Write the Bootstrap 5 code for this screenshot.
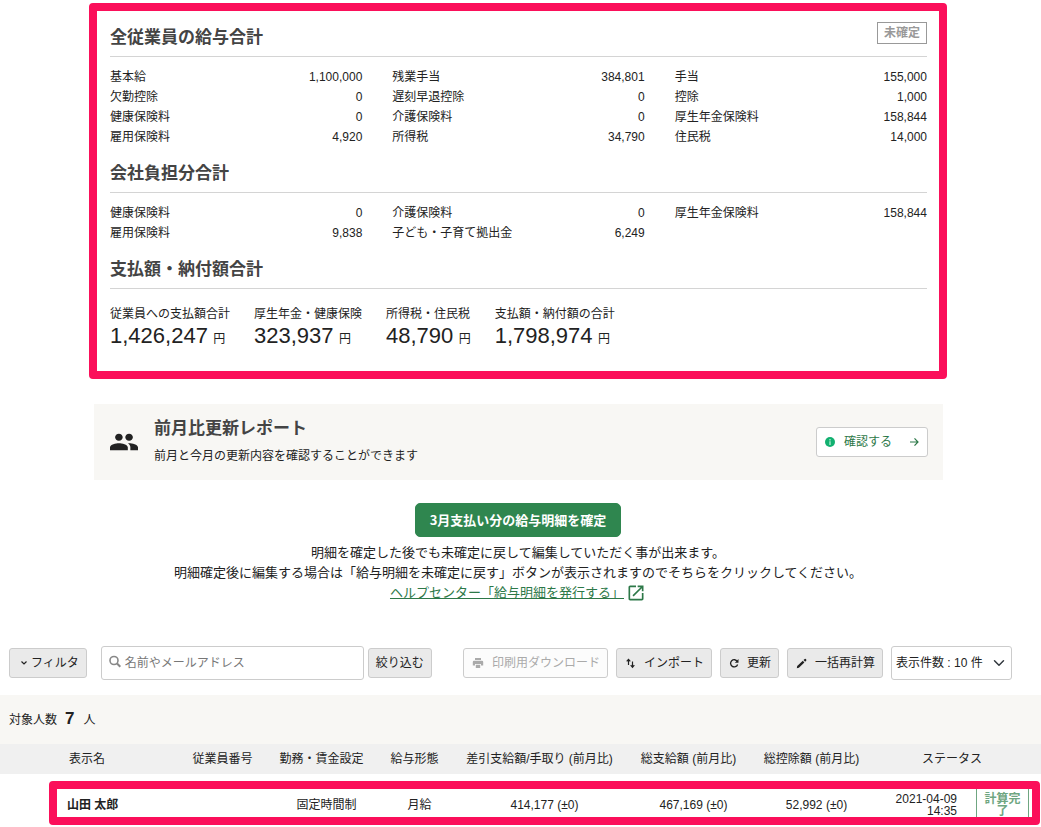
<!DOCTYPE html>
<html lang="ja">
<head>
<meta charset="utf-8">
<meta name="viewport" content="width=device-width, initial-scale=1">
<title>給与明細</title>
<link href="https://cdn.jsdelivr.net/npm/bootstrap@5.3.0/dist/css/bootstrap.min.css" rel="stylesheet">
<style>
  body { font-family: "Liberation Sans", "Noto Sans CJK JP", sans-serif; font-size: 12px; line-height: 20px; color: #222; background: #fff; }
  svg { fill: currentColor; flex: none; }
  .frame { border: 8px solid #fb0f5a; border-radius: 4px; }
  .page-col { max-width: 863px; padding: 3px 5px 0 0; }
  .summary { padding: 11px 12px 20px 13px; }
  .section-head { border-bottom: 1px solid #d4d4d4; padding-bottom: 6px; margin-bottom: 10px; }
  .section-title { font-size: 17px; line-height: 24px; font-weight: 700; color: #444; margin: 0; }
  .later { margin-top: 15px; }
  .first-title { padding-top: 4px; }
  .state { border: 1px solid #999; color: #999; font-weight: 700; padding: 0 6px; height: 22px; line-height: 20px; }
  .sums { --bs-gutter-x: 30px; }
  .sums dt, .totals dt { font-weight: 400; }
  .totals { gap: 24px; padding-top: 5px; }
  .totals dd { line-height: 24px; }
  .amount { font-size: 22px; line-height: 24px; margin-right: 2px; }
  .report { background: #f8f7f4; margin: 25px 4px 0 5px; padding: 13px 15px 14px 16px; }
  .report p { line-height: 20px; margin-top: 5px; }
  .btn { font-size: 12px; line-height: 20px; border-radius: 3px; padding: 4px 8px; color: #222; white-space: nowrap; }
  .btn-check-report { background: #fff; border-color: #ccc; color: #2d7848; }
  .btn-check-report span { margin: 0 17px 0 9px; }
  .btn-fix { background: #2f864f; border-color: #2f864f; color: #fff; font: 700 13px/20px "Noto Sans CJK JP", sans-serif; border-radius: 5px; padding: 6px 14px; margin-top: 23px; }
  .guide { font-size: 13px; }
  .guide p { margin: 6px 0 0; }
  .guide a { color: #2d7848; }
  .guide svg { margin-left: 2px; }
  .tools { padding: 0 29px 0 9px; margin-top: 43px; }
  .btn-tool, .btn-tool:disabled { background: #eaeaea; border-color: #ccc; height: 30px; }
  .btn-tool:disabled { background: #fcfcfc; border-color: #ccc; color: #aaa; opacity: 1; }
  .btn-narrow { padding: 4px 7px; }
  .tool-icon { gap: 8px; padding: 4px 7px 4px 8px; }
  .search { border: 1px solid #ccc; border-radius: 3px; height: 34px; max-width: 263px; padding: 0 7px; gap: 4px; margin-left: 14px; color: #888; }
  .search input { font-size: 12px; line-height: 20px; border: 0; padding: 0; min-width: 0; outline: 0; color: #222; }
  .search input::placeholder { color: #777; }
  .form-select { font-size: 12px; line-height: 20px; height: 34px; width: 121px; padding: 0 24px 0 4px; border-color: #ccc; border-radius: 3px; color: #222; background-position: right 6px center; background-size: 12px 12px; }
  .headcount { background: #f8f7f4; padding: 14px 9px; margin-top: 15px; }
  .headcount strong { font-size: 17px; margin: 0 9px 0 8px; }
  .staff { table-layout: fixed; min-width: 960px; margin: 0; color: #222; --bs-table-color: #222; }
  .staff th, .staff td { border: 0; padding: 5px 0; text-align: center; font-weight: 400; vertical-align: middle; white-space: nowrap; }
  .staff thead th { background: #f0f0f0; color: #222; }
  .staff thead th:last-child { padding-right: 10px; }
  .staff tbody td, .staff tbody th { height: 53px; padding: 8px 0 0 10px; }
  .staff tr > .name { text-align: left; padding-left: 20px; }
  .staff tbody tr > .name { font-weight: 700; padding-left: 18px; }
  .done { border: 1px solid #6fa681; color: #6fa681; font-weight: 700; width: 53px; line-height: 12px; padding: 7px 6px; white-space: normal; }
  .stamp { line-height: 12px; text-align: right; margin-right: 19px; }
  .row-mark { left: 49px; right: 1px; bottom: 2px; height: 44px; pointer-events: none; }
  .w-pick { width: 49px; } .w-num { width: 87px; } .w-rule { width: 111px; } .w-type { width: 75px; }
  .w-net { width: 175px; } .w-sum { width: 123px; } .w-state { width: 168px; }
</style>
</head>
<body>
<main>
  <div class="page-col mx-auto">
    <section class="frame summary">
      <div class="section-head d-flex justify-content-between align-items-start">
        <h2 class="section-title first-title">全従業員の給与合計</h2>
        <span class="state">未確定</span>
      </div>
      <div class="row sums">
        <dl class="col-4 mb-0">
          <div class="d-flex justify-content-between"><dt>基本給</dt><dd class="m-0">1,100,000</dd></div>
          <div class="d-flex justify-content-between"><dt>欠勤控除</dt><dd class="m-0">0</dd></div>
          <div class="d-flex justify-content-between"><dt>健康保険料</dt><dd class="m-0">0</dd></div>
          <div class="d-flex justify-content-between"><dt>雇用保険料</dt><dd class="m-0">4,920</dd></div>
        </dl>
        <dl class="col-4 mb-0">
          <div class="d-flex justify-content-between"><dt>残業手当</dt><dd class="m-0">384,801</dd></div>
          <div class="d-flex justify-content-between"><dt>遅刻早退控除</dt><dd class="m-0">0</dd></div>
          <div class="d-flex justify-content-between"><dt>介護保険料</dt><dd class="m-0">0</dd></div>
          <div class="d-flex justify-content-between"><dt>所得税</dt><dd class="m-0">34,790</dd></div>
        </dl>
        <dl class="col-4 mb-0">
          <div class="d-flex justify-content-between"><dt>手当</dt><dd class="m-0">155,000</dd></div>
          <div class="d-flex justify-content-between"><dt>控除</dt><dd class="m-0">1,000</dd></div>
          <div class="d-flex justify-content-between"><dt>厚生年金保険料</dt><dd class="m-0">158,844</dd></div>
          <div class="d-flex justify-content-between"><dt>住民税</dt><dd class="m-0">14,000</dd></div>
        </dl>
      </div>
      <div class="section-head later"><h2 class="section-title">会社負担分合計</h2></div>
      <div class="row sums">
        <dl class="col-4 mb-0">
          <div class="d-flex justify-content-between"><dt>健康保険料</dt><dd class="m-0">0</dd></div>
          <div class="d-flex justify-content-between"><dt>雇用保険料</dt><dd class="m-0">9,838</dd></div>
        </dl>
        <dl class="col-4 mb-0">
          <div class="d-flex justify-content-between"><dt>介護保険料</dt><dd class="m-0">0</dd></div>
          <div class="d-flex justify-content-between"><dt>子ども・子育て拠出金</dt><dd class="m-0">6,249</dd></div>
        </dl>
        <dl class="col-4 mb-0">
          <div class="d-flex justify-content-between"><dt>厚生年金保険料</dt><dd class="m-0">158,844</dd></div>
        </dl>
      </div>
      <div class="section-head later"><h2 class="section-title">支払額・納付額合計</h2></div>
      <dl class="d-flex flex-wrap totals mb-0">
        <div><dt>従業員への支払額合計</dt><dd class="m-0"><span class="amount">1,426,247</span> 円</dd></div>
        <div><dt>厚生年金・健康保険</dt><dd class="m-0"><span class="amount">323,937</span> 円</dd></div>
        <div><dt>所得税・住民税</dt><dd class="m-0"><span class="amount">48,790</span> 円</dd></div>
        <div><dt>支払額・納付額の合計</dt><dd class="m-0"><span class="amount">1,798,974</span> 円</dd></div>
      </dl>
    </section>

    <section class="report d-flex align-items-center">
      <svg class="me-3" width="28" height="28" viewBox="1 0 22 24" preserveAspectRatio="none" aria-hidden="true"><path d="M16 11c1.66 0 2.99-1.34 2.99-3S17.66 5 16 5s-3 1.34-3 3 1.34 3 3 3zm-8 0c1.66 0 2.99-1.34 2.99-3S9.66 5 8 5 5 6.340 5 8s1.340 3 3 3zm0 2c-2.330 0-7 1.170-7 3.500V19h14v-2.500c0-2.330-4.670-3.500-7-3.500zm8 0c-.29 0-.62.02-.97.05 1.160.84 1.970 1.970 1.970 3.450V19h6v-2.500c0-2.330-4.670-3.500-7-3.500z"/></svg>
      <div class="flex-grow-1">
        <h2 class="section-title">前月比更新レポート</h2>
        <p class="mb-0">前月と今月の更新内容を確認することができます</p>
      </div>
      <button type="button" class="btn btn-check-report d-flex align-items-center">
        <svg width="10" height="10" viewBox="0 0 10 10" aria-hidden="true"><circle cx="5" cy="5" r="5" fill="#12b070"/><path d="M4.300 2h1.400v1.400H4.300zM4.300 4.200h1.400V8H4.300z" fill="#a8e8cb"/></svg>
        <span>確認する</span>
        <svg width="10" height="10" viewBox="0 0 10 10" aria-hidden="true"><path d="M1 5h8M5.500 1.300 9 5 5.500 8.700" fill="none" stroke="currentColor" stroke-width="1.200"/></svg>
      </button>
    </section>

    <section class="text-center guide">
      <button type="button" class="btn btn-fix d-block mx-auto">3月支払い分の給与明細を確定</button>
      <p>明細を確定した後でも未確定に戻して編集していただく事が出来ます。<br>明細確定後に編集する場合は「給与明細を未確定に戻す」ボタンが表示されますのでそちらをクリックしてください。</p>
      <div class="d-flex justify-content-center">
        <a href="#">ヘルプセンター「給与明細を発行する」</a>
        <svg width="20" height="20" viewBox="0 0 24 24" color="#2d7848" aria-hidden="true"><path d="M19 19H5V5h7V3H5c-1.110 0-2 .9-2 2v14c0 1.100.89 2 2 2h14c1.100 0 2-.9 2-2v-7h-2v7zM14 3v2h3.590l-9.830 9.830 1.410 1.410L19 6.410V10h2V3h-7z"/></svg>
      </div>
    </section>
  </div>

  <form class="tools d-flex align-items-center">
    <button type="button" class="btn btn-tool btn-narrow d-flex align-items-center"><svg class="mx-1" width="6" height="6" viewBox="0 0 6 6" aria-hidden="true"><path d="M.5 1.500 3 4l2.500-2.500" fill="none" stroke="currentColor" stroke-width="1.200"/></svg>フィルタ</button>
    <label class="search d-flex align-items-center flex-grow-1">
      <svg width="12" height="16" viewBox="0 0 12 16" aria-hidden="true"><path d="M8 8.500 11.300 11.800" stroke="currentColor" stroke-width="2"/><circle cx="5" cy="5.500" r="4" fill="none" stroke="currentColor" stroke-width="1.600"/></svg>
      <input class="flex-grow-1" type="search" placeholder="名前やメールアドレス" aria-label="名前やメールアドレス">
    </label>
    <button type="submit" class="btn btn-tool btn-narrow ms-1">絞り込む</button>
    <div class="d-flex align-items-center gap-2 ms-auto">
      <button type="button" class="btn btn-tool tool-icon d-flex align-items-center" disabled><svg width="12" height="12" viewBox="0 0 12 12" aria-hidden="true"><path d="M3 1h6v2H3zM2 3.800h8a1.200 1.200 0 0 1 1.200 1.200v3.500H9V7H3v1.500H.8V5A1.200 1.200 0 0 1 2 3.800zM3.800 7.800h4.400V11H3.800z"/></svg>印刷用ダウンロード</button>
      <button type="button" class="btn btn-tool tool-icon d-flex align-items-center"><svg width="11" height="12" viewBox="0 0 11 12" aria-hidden="true"><path d="M3.500 8V3M1.700 4.400 3.500 2.300l1.800 2.100M7.500 4.500v5M5.700 8.200l1.800 2.100 1.800-2.100" fill="none" stroke="currentColor" stroke-width="1.200"/></svg>インポート</button>
      <button type="button" class="btn btn-tool tool-icon d-flex align-items-center"><svg width="10" height="10" viewBox="0 0 10 10" aria-hidden="true"><path d="M8.300 3.500A3.600 3.600 0 1 0 8.600 6.500" fill="none" stroke="currentColor" stroke-width="1.300"/><path d="M9.500 1v3.700H5.800z"/></svg>更新</button>
      <button type="button" class="btn btn-tool tool-icon d-flex align-items-center"><svg width="11" height="11" viewBox="0 0 11 11" aria-hidden="true"><path d="M.8 10.200 1.200 8 6.800 2.800 8.400 4.500 2.900 9.800zM7.500 2.100 8.700 1q.6-.4 1.100.1l.4.5q.4.600 0 1.100L9.100 3.800z"/></svg>一括再計算</button>
      <select class="form-select" aria-label="表示件数"><option>表示件数 : 10 件</option></select>
    </div>
  </form>

  <section class="headcount">対象人数<strong>7</strong>人</section>

  <div class="position-relative">
    <table class="table staff w-100">
      <colgroup><col class="w-pick"><col><col class="w-num"><col class="w-rule"><col class="w-type"><col class="w-net"><col class="w-sum"><col class="w-sum"><col class="w-state"></colgroup>
      <thead>
        <tr><th></th><th class="name" scope="col">表示名</th><th scope="col">従業員番号</th><th scope="col">勤務・賃金設定</th><th scope="col">給与形態</th><th scope="col">差引支給額/手取り (前月比)</th><th scope="col">総支給額 (前月比)</th><th scope="col">総控除額 (前月比)</th><th scope="col">ステータス</th></tr>
      </thead>
      <tbody>
        <tr><td></td><th class="name" scope="row">山田 太郎</th><td></td><td>固定時間制</td><td>月給</td><td>414,177 (±0)</td><td>467,169 (±0)</td><td>52,992 (±0)</td>
          <td><div class="d-flex align-items-center justify-content-end me-2 pe-1"><div class="stamp">2021-04-09<br>14:35</div><div class="done">計算完了</div></div></td></tr>
      </tbody>
    </table>
    <div class="frame row-mark position-absolute"></div>
  </div>
</main>
<script src="https://cdn.jsdelivr.net/npm/bootstrap@5.3.0/dist/js/bootstrap.bundle.min.js"></script>
</body>
</html>
